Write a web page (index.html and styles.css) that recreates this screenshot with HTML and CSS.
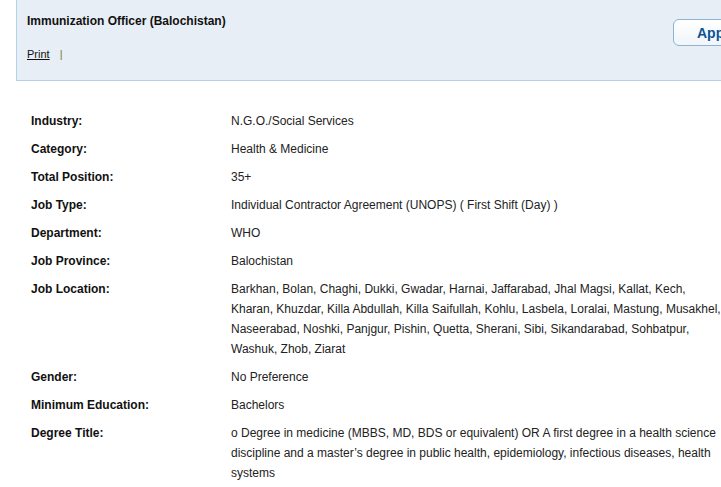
FILE: index.html
```html
<!DOCTYPE html>
<html>
<head>
<meta charset="utf-8">
<link rel="stylesheet" href="styles.css">
</head>
<body>
<div class="page">
  <div class="job-header">
    <div class="head-left">
      <h1 class="job-title">Immunization Officer (Balochistan)</h1>
      <div class="tools"><a class="print" href="#">Print</a><span class="sep">|</span></div>
    </div>
    <button class="apply">Apply Now</button>
  </div>
  <div class="details">
    <div class="row"><div class="label">Industry:</div><div class="value">N.G.O./Social Services</div></div>
    <div class="row"><div class="label">Category:</div><div class="value">Health &amp; Medicine</div></div>
    <div class="row"><div class="label">Total Position:</div><div class="value">35+</div></div>
    <div class="row"><div class="label">Job Type:</div><div class="value">Individual Contractor Agreement (UNOPS) ( First Shift (Day) )</div></div>
    <div class="row"><div class="label">Department:</div><div class="value">WHO</div></div>
    <div class="row"><div class="label">Job Province:</div><div class="value">Balochistan</div></div>
    <div class="row"><div class="label">Job Location:</div><div class="value">Barkhan, Bolan, Chaghi, Dukki, Gwadar, Harnai, Jaffarabad, Jhal Magsi, Kallat, Kech,<br>Kharan, Khuzdar, Killa Abdullah, Killa Saifullah, Kohlu, Lasbela, Loralai, Mastung, Musakhel,<br>Naseerabad, Noshki, Panjgur, Pishin, Quetta, Sherani, Sibi, Sikandarabad, Sohbatpur,<br>Washuk, Zhob, Ziarat</div></div>
    <div class="row"><div class="label">Gender:</div><div class="value">No Preference</div></div>
    <div class="row"><div class="label">Minimum Education:</div><div class="value">Bachelors</div></div>
    <div class="row"><div class="label">Degree Title:</div><div class="value">o Degree in medicine (MBBS, MD, BDS or equivalent) OR A first degree in a health science<br>discipline and a master’s degree in public health, epidemiology, infectious diseases, health<br>systems</div></div>
  </div>
</div>
</body>
</html>
```
FILE: styles.css
```css
html, body {
  margin: 0;
  padding: 0;
  background: #ffffff;
  overflow: hidden;
}
body {
  font-family: Arial, "Liberation Sans", sans-serif;
  color: #222;
}
.page {
  width: 721px;
  height: 487px;
  overflow: hidden;
}
.job-header {
  margin-left: 16px;
  width: 800px;
  height: 80px;
  box-sizing: content-box;
  background: #e8eef6;
  border-left: 1px solid #b4d2e6;
  border-bottom: 1px solid #b4d2e6;
  display: flex;
  justify-content: space-between;
  align-items: flex-start;
}
.head-left {
  padding: 13px 0 0 10px;
}
.job-title {
  margin: 0;
  font-size: 12px;
  font-weight: bold;
  line-height: 16px;
  color: #111;
}
.tools {
  margin-top: 18px;
  font-size: 11px;
  line-height: 14px;
  display: flex;
  align-items: center;
}
.print {
  color: #111;
  text-decoration: underline;
}
.sep {
  margin-left: 10px;
  color: #7a7a3a;
}
.apply {
  margin: 19px 24px 0 0;
  width: 120px;
  height: 27px;
  padding: 0 0 0 23px;
  text-align: left;
  border: 1px solid #8db4d2;
  border-radius: 6px;
  background: linear-gradient(#ffffff, #f1f5f9);
  color: #0b5394;
  font-family: Arial, "Liberation Sans", sans-serif;
  font-weight: bold;
  font-size: 14px;
}
.details {
  margin: 26px 0 0 31px;
  font-size: 12px;
  line-height: 20px;
}
.row {
  display: flex;
  padding: 4px 0;
}
.label {
  flex: 0 0 200px;
  font-weight: bold;
  color: #111;
}
.value {
  flex: 1;
  color: #222;
  white-space: nowrap;
}
```
